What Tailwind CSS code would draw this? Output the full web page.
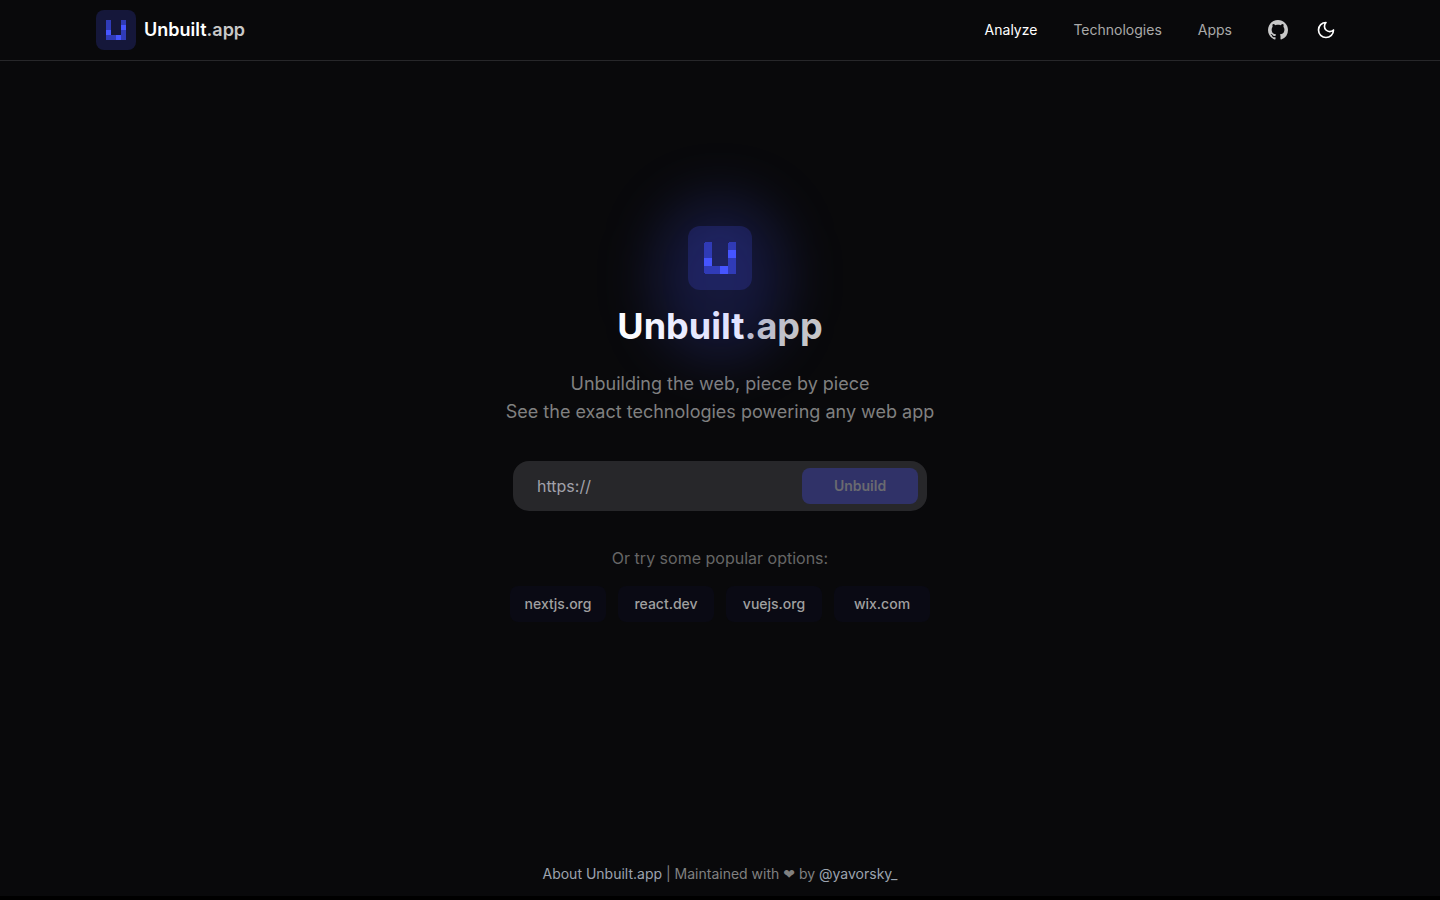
<!doctype html>
<html lang="en" class="bg-black">

<head>
	<meta charset="UTF-8" />
	<meta name="viewport" content="width=device-width, initial-scale=1.0" />
	<title>Unbuilt.app</title>
	<script src="https://cdn.jsdelivr.net/npm/@tailwindcss/browser@4"></script>
</head>

<body class="bg-black font-['Inter',sans-serif] text-[#c8c8c8]">
	<div class="flex min-h-[calc(100vh-4px)] flex-col bg-[#09090b]">
		<header class="border-b border-[#27272a]">
			<div class="container mx-auto flex h-[60px] items-center justify-between px-6 xl:px-4">
				<a href="/" class="flex items-center gap-2 text-lg font-semibold text-white">
					<span class="flex size-10 items-center justify-center rounded-lg bg-[#15173a]">
						<svg class="size-5" viewBox="0 0 4 4" shape-rendering="crispEdges" aria-hidden="true">
							<path fill="#303bb8" d="M0 0h1v3h2V0h1v4H0z" />
							<path fill="#4655ff" d="M0 2h1v1H0zM2 3h1v1H2zM3 1h1v1H3z" />
						</svg>
					</span>
					<span>Unbuilt<span class="text-[#c8c8c8]">.app</span></span>
				</a>
				<nav class="flex items-center text-sm">
					<a href="/" class="text-white">Analyze</a>
					<a href="/technologies" class="ml-9 text-[#a9a9a9]">Technologies</a>
					<a href="/apps" class="ml-9 text-[#a9a9a9]">Apps</a>
					<a href="https://github.com/yavorsky/unbuilt.app" class="ml-9" aria-label="GitHub">
						<svg class="size-5" viewBox="0 0 16 16" fill="currentColor" aria-hidden="true">
							<path d="M8 0C3.58 0 0 3.58 0 8c0 3.54 2.29 6.53 5.47 7.59.4.07.55-.17.55-.38 0-.19-.01-.82-.01-1.49-2.01.37-2.53-.49-2.69-.94-.09-.23-.48-.94-.82-1.13-.28-.15-.68-.52-.01-.53.63-.01 1.08.58 1.23.82.72 1.21 1.87.87 2.33.66.07-.52.28-.87.51-1.07-1.78-.2-3.64-.89-3.64-3.95 0-.87.31-1.59.82-2.15-.08-.2-.36-1.02.08-2.12 0 0 .67-.21 2.2.82.64-.18 1.32-.27 2-.27s1.36.09 2 .27c1.53-1.04 2.2-.82 2.2-.82.44 1.1.16 1.92.08 2.12.51.56.82 1.27.82 2.15 0 3.07-1.87 3.75-3.65 3.95.29.25.54.73.54 1.48 0 1.07-.01 1.93-.01 2.2 0 .21.15.46.55.38A8.01 8.01 0 0 0 16 8c0-4.42-3.58-8-8-8z" />
						</svg>
					</a>
					<button type="button" class="ml-5 flex size-9 items-center justify-center text-white" aria-label="Toggle theme">
						<svg class="size-5" viewBox="0 0 24 24" fill="none" stroke="currentColor" stroke-width="2" stroke-linecap="round" stroke-linejoin="round" aria-hidden="true">
							<path d="M12 3a6 6 0 0 0 9 9 9 9 0 1 1-9-9Z" />
						</svg>
					</button>
				</nav>
			</div>
		</header>

		<main class="flex grow flex-col items-center justify-center px-4 pb-[66px]">
			<div class="relative flex flex-col items-center gap-4">
				<span class="flex size-16 items-center justify-center rounded-xl bg-[#15173a]">
					<svg class="size-8" viewBox="0 0 32 32" shape-rendering="crispEdges" aria-hidden="true">
						<path fill="#2b35a6" d="M1 0h6l1 1v23h16V1l1-1h6l1 1v30l-1 1H1l-1-1V1z" />
						<path fill="#4655ff" d="M0 16h8v8H0zM16 24h8v8h-8zM24 8h8v8h-8z" />
					</svg>
				</span>
				<h1 class="text-4xl font-bold text-white">Unbuilt<span class="text-[#c8c8c8]">.app</span></h1>
				<!-- Glow over the logo and the title -->
				<div class="pointer-events-none absolute -top-7 left-1/2 h-40 w-32 -translate-x-1/2 rounded-full bg-[#4655ff]/20 blur-[28px]"></div>
			</div>
			<p class="mt-6 text-center text-lg leading-7 text-[#808080]">
				Unbuilding the web, piece by piece<br />
				See the exact technologies powering any web app
			</p>

			<form class="mt-[35px] flex h-[50px] w-full max-w-[414px] items-center rounded-2xl bg-[#27272a] pr-[9px] pl-6">
				<input type="text" aria-label="Website address" placeholder="https://" class="min-w-0 grow bg-transparent text-base outline-none placeholder:text-[#a1a1aa]" />
				<button type="submit" disabled class="h-9 w-[116px] rounded-lg bg-[#303268] text-sm font-semibold text-[#6a6a70]">Unbuild</button>
			</form>

			<p class="mt-[35px] text-base text-[#666666]">Or try some popular options:</p>
			<div class="mt-4 grid grid-cols-2 gap-3 text-sm font-medium text-[#a0a0a0] sm:grid-cols-4">
				<button type="button" class="h-9 w-24 rounded-lg bg-[#0a0a14]">nextjs.org</button>
				<button type="button" class="h-9 w-24 rounded-lg bg-[#0a0a14]">react.dev</button>
				<button type="button" class="h-9 w-24 rounded-lg bg-[#0a0a14]">vuejs.org</button>
				<button type="button" class="h-9 w-24 rounded-lg bg-[#0a0a14]">wix.com</button>
			</div>
		</main>

		<footer class="px-4 py-3 text-center text-sm text-[#808080]">
			<a href="/about" class="text-[#9ca3af]">About Unbuilt.app</a> | Maintained with <span class="font-['DejaVu_Sans',sans-serif]">❤</span> by
			<a href="https://x.com/yavorsky_" class="text-[#9ca3af]">@yavorsky_</a>
		</footer>
	</div>
</body>

</html>
